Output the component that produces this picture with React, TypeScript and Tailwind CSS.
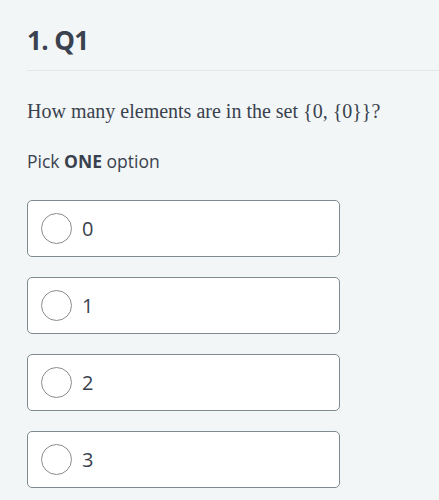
const options = ['0', '1', '2', '3'];

function Option({ label }: { label: string }) {
  return (
    <div className="flex h-[57px] w-[313px] items-center rounded-[5px] border border-[#7f8b90] bg-white pl-[13px]">
      <span className="h-[31px] w-[31px] rounded-full border border-[#8c8c8c] bg-white" />
      <span className="ml-[10px] text-[20px] text-[#39424e]">{label}</span>
    </div>
  );
}

export default function App() {
  return (
    <div
      className="min-h-[500px] bg-[#f3f6f7] text-[#39424e]"
      style={{ fontFamily: '"Open Sans", sans-serif' }}
    >
      <div className="pl-[27px] pt-[22px]">
        <h1 className="text-[26px] font-bold leading-[36px] tracking-[-0.6px]">1. Q1</h1>
      </div>
      <div className="ml-[27px] mt-[12px] h-px bg-[#e2e7ea]" />
      <div className="px-[27px]">
        <p
          className="mt-[27px] text-[20px] leading-[26px]"
          style={{ fontFamily: '"Liberation Serif", serif' }}
        >
          How many elements are in the set {'{'}0, {'{'}0{'}'}{'}'}?
        </p>
        <p className="mt-[25px] text-[17.5px] leading-[24px]">
          Pick <b>ONE</b> option
        </p>
        <div className="mt-[27px] flex flex-col gap-[20px]">
          {options.map((o) => (
            <Option key={o} label={o} />
          ))}
        </div>
      </div>
    </div>
  );
}
